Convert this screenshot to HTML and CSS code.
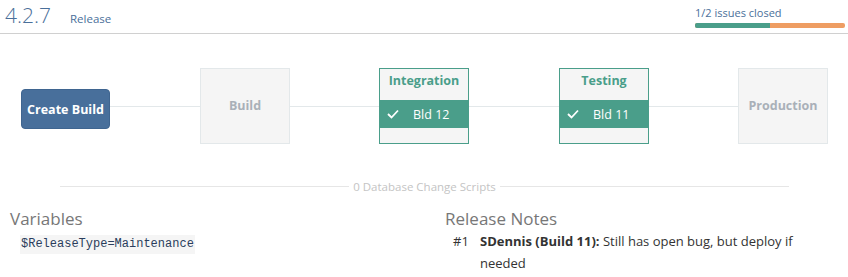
FILE: index.html
```html
<!DOCTYPE html>
<html>
<head>
<meta charset="utf-8">
<link rel="stylesheet" href="styles.css">
</head>
<body>
<div class="header">
  <div class="title">
    <span class="version">4.2.7</span>
    <span class="kind">Release</span>
  </div>
  <div class="issues">
    <div class="issues-text">1/2 issues closed</div>
    <div class="bar"><div class="bar-done" style="width:50%"></div></div>
  </div>
</div>

<div class="pipeline">
  <div class="create">Create Build</div>
  <div class="link w90"></div>
  <div class="stage empty">Build</div>
  <div class="link w89"></div>
  <div class="stage active">
    <div class="stage-name">Integration</div>
    <div class="stage-build">
      <svg class="check" width="12" height="10" viewBox="0 0 12 10"><polyline points="1,5 4.5,8.5 11,1.5" fill="none" stroke="#fff" stroke-width="1.8"/></svg>
      <span>Bld 12</span>
    </div>
  </div>
  <div class="link w90"></div>
  <div class="stage active">
    <div class="stage-name">Testing</div>
    <div class="stage-build">
      <svg class="check" width="12" height="10" viewBox="0 0 12 10"><polyline points="1,5 4.5,8.5 11,1.5" fill="none" stroke="#fff" stroke-width="1.8"/></svg>
      <span>Bld 11</span>
    </div>
  </div>
  <div class="link w89"></div>
  <div class="stage empty">Production</div>
</div>

<div class="divider">
  <div class="divider-line"></div>
  <div class="divider-text">0 Database Change Scripts</div>
  <div class="divider-line"></div>
</div>

<div class="details">
  <div class="col">
    <h2>Variables</h2>
    <div class="vars"><code>$ReleaseType=Maintenance</code></div>
  </div>
  <div class="col">
    <h2>Release Notes</h2>
    <div class="note">
      <span class="note-num">#1</span>
      <p class="note-text"><b>SDennis (Build 11):</b> Still has open bug, but deploy if needed</p>
    </div>
  </div>
</div>
</body>
</html>
```
FILE: styles.css
```css
html, body {
  margin: 0;
  padding: 0;
  background: #fff;
}
body {
  font-family: "Open Sans", "Noto Sans", sans-serif;
  color: #333;
  width: 848px;
  height: 277px;
  overflow: hidden;
}
.header {
  display: flex;
  justify-content: space-between;
  align-items: flex-start;
  height: 34px;
  box-sizing: border-box;
  border-bottom: 1px solid #d0d0d0;
  padding: 0 3px 0 5px;
}
.title {
  display: flex;
  align-items: baseline;
}
.version {
  font-size: 21px;
  line-height: 30px;
  color: #4a6f9a;
  font-weight: 300;
  margin-right: 19px;
}
.kind {
  font-size: 11.5px;
  color: #4a6f9a;
}
.issues {
  width: 150px;
  padding-top: 5px;
}
.issues-text {
  font-size: 11px;
  line-height: 16px;
  color: #4a6f9a;
}
.bar {
  margin-top: 2px;
  height: 5px;
  border-radius: 2px;
  background: #ee9d63;
  overflow: hidden;
}
.bar-done {
  height: 100%;
  background: #4a9e8a;
}

.pipeline {
  display: flex;
  align-items: center;
  padding: 34px 0 0 21px;
  height: 76px;
}
.create {
  width: 89px;
  height: 40px;
  margin-top: 6px;
  box-sizing: border-box;
  background: #486f9b;
  border: 1px solid #3f6590;
  border-radius: 4px;
  color: #fff;
  font-weight: 700;
  font-size: 12.5px;
  display: flex;
  align-items: center;
  justify-content: center;
}
.link {
  height: 1px;
  background: #e3e8ea;
  margin-top: 1px;
}
.w90 { width: 90px; }
.w89 { width: 89px; }
.stage {
  width: 90px;
  height: 76px;
  box-sizing: border-box;
  background: #f5f5f5;
  border: 1px solid #e3e8ea;
  font-weight: 700;
  font-size: 12.5px;
}
.stage.empty {
  display: flex;
  align-items: center;
  justify-content: center;
  color: #a9b0b8;
  padding-bottom: 2px;
}
.stage.active {
  border-color: #4a9e8a;
  display: flex;
  flex-direction: column;
}
.stage-name {
  height: 31px;
  line-height: 24px;
  text-align: center;
  color: #4a9e8a;
}
.stage-build {
  height: 28px;
  background: #4a9e8a;
  color: #fff;
  font-weight: 400;
  font-size: 12.5px;
  display: flex;
  align-items: center;
  padding-left: 7px;
}
.check {
  margin-right: 14px;
}

.divider {
  display: flex;
  align-items: center;
  margin: 34px 59px 0 60px;
}
.divider-line {
  flex: 1;
  height: 1px;
  background: #e6e6e6;
}
.divider-text {
  font-size: 11.5px;
  color: #c4c4c4;
  padding: 0 4px;
  line-height: 16px;
  position: relative;
  top: 1px;
}

.details {
  display: grid;
  grid-template-columns: 435px 1fr;
  padding: 0 10px;
  margin-top: 14px;
}
.col h2 {
  margin: 0;
  font-size: 17px;
  font-weight: 400;
  color: #777;
  line-height: 22px;
}
.vars {
  padding-left: 10px;
  margin-top: 0;
}
code {
  font-family: "Liberation Mono", "DejaVu Sans Mono", monospace;
  font-size: 12px;
  line-height: 19px;
  display: inline-block;
  background: #f5f5f5;
  color: #2a3d5c;
  padding: 0 1px;
}
.note {
  display: flex;
  padding-left: 8px;
  font-size: 13px;
  line-height: 22px;
  color: #333;
}
.note-num {
  width: 27px;
  flex: none;
}
.note-text {
  margin: 0;
  max-width: 345px;
}
.note-text b {
  font-weight: 700;
}
```
